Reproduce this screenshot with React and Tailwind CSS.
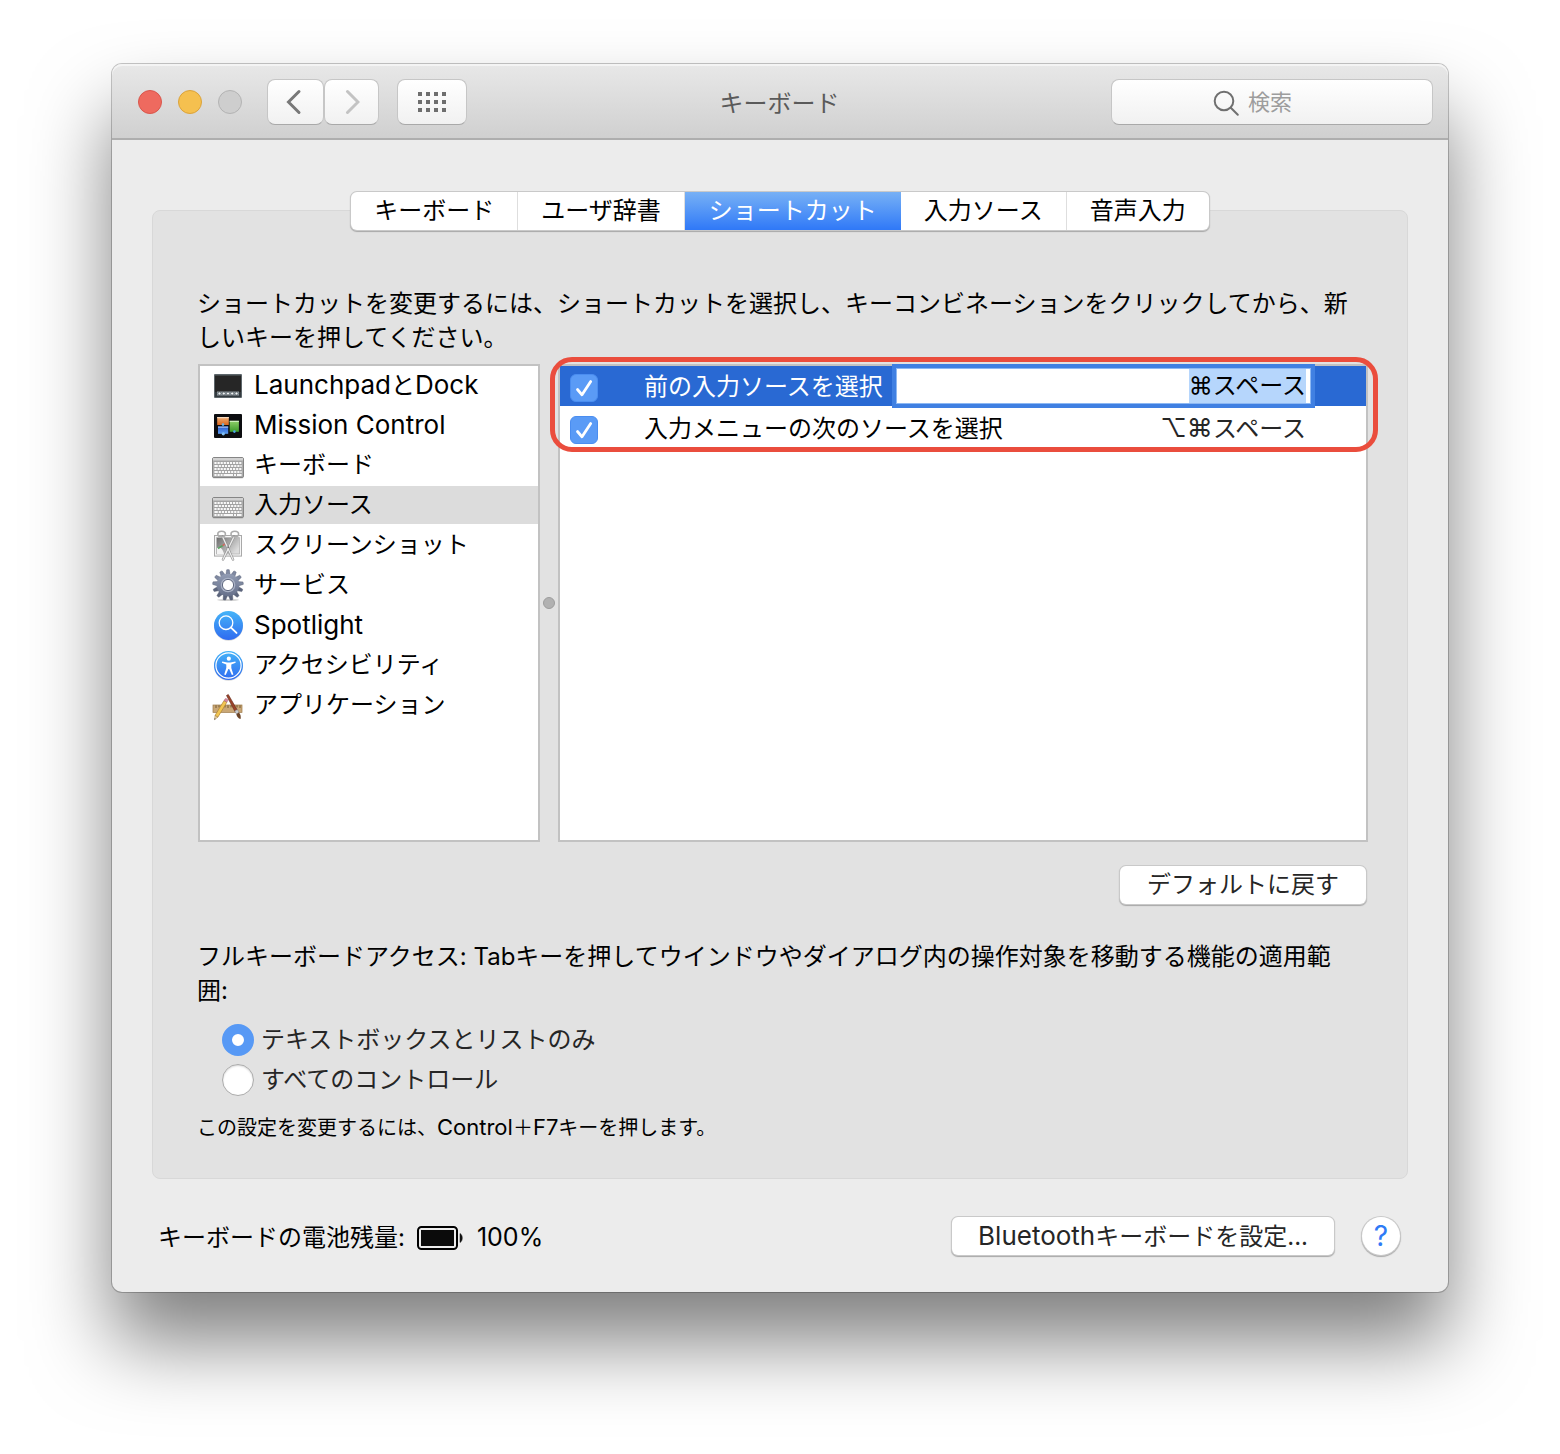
import { useEffect, useRef, useState } from 'react';

const TABS = ['キーボード', 'ユーザ辞書', 'ショートカット', '入力ソース', '音声入力'];

const CATEGORIES = [
  { id: 'launchpad', label: 'LaunchpadとDock', Icon: LaunchpadIcon },
  { id: 'mission', label: 'Mission Control', Icon: MissionControlIcon },
  { id: 'keyboard', label: 'キーボード', Icon: KeyboardIcon },
  { id: 'input', label: '入力ソース', Icon: KeyboardIcon },
  { id: 'screenshot', label: 'スクリーンショット', Icon: ScreenshotIcon },
  { id: 'services', label: 'サービス', Icon: GearIcon },
  { id: 'spotlight', label: 'Spotlight', Icon: SpotlightIcon },
  { id: 'accessibility', label: 'アクセシビリティ', Icon: AccessibilityIcon },
  { id: 'apps', label: 'アプリケーション', Icon: AppsIcon }
];

const ACCESS_MODES = [
  { id: 'text', label: 'テキストボックスとリストのみ' },
  { id: 'all', label: 'すべてのコントロール' }
];

function LaunchpadIcon() {
  return (
    <svg viewBox="0 0 32 32" className="size-8 shrink-0" aria-hidden="true">
      <rect x="2" y="5" width="28" height="24" rx="1" fill="#5d666b" />
      <rect x="3" y="6.5" width="26" height="17" fill="#262626" />
      <rect x="3" y="23" width="26" height="5" fill="#343b40" />
      <rect x="5" y="22.5" width="22" height="4" fill="#8d979e" />
      {[7.5, 11.8, 16, 20.2, 24.5].map((x) => (
        <circle key={x} cx={x} cy="24.5" r="1.5" fill="#f0f3f5" stroke="#3c4449" strokeWidth="0.6" />
      ))}
    </svg>
  );
}

function MissionControlIcon() {
  return (
    <svg viewBox="0 0 32 32" className="size-8 shrink-0" aria-hidden="true">
      <defs>
        <linearGradient id="mcOrange" x1="0" y1="0" x2="0" y2="1">
          <stop offset="0" stopColor="#f0b27a" />
          <stop offset="1" stopColor="#d9661c" />
        </linearGradient>
        <linearGradient id="mcGreen" x1="0" y1="0" x2="0" y2="1">
          <stop offset="0" stopColor="#8fd06a" />
          <stop offset="1" stopColor="#3c9a2a" />
        </linearGradient>
        <linearGradient id="mcBlue" x1="0" y1="0" x2="0" y2="1">
          <stop offset="0" stopColor="#2a5bd0" />
          <stop offset="1" stopColor="#5b9cf0" />
        </linearGradient>
      </defs>
      <rect x="2" y="5" width="28" height="24" rx="1" fill="#0c0d10" />
      <rect x="5.2" y="8" width="11.6" height="8" fill="url(#mcOrange)" />
      <rect x="5.2" y="8" width="11.6" height="1.2" fill="#f7dcc2" />
      <rect x="17.7" y="11.8" width="9.2" height="11" fill="url(#mcGreen)" />
      <rect x="17.7" y="11.8" width="9.2" height="1.2" fill="#cdeebc" />
      <rect x="6" y="17.5" width="10.2" height="7.3" fill="url(#mcBlue)" />
      <rect x="6" y="17.5" width="10.2" height="1.2" fill="#a9c6f6" />
      <circle cx="11" cy="15.6" r="1.3" fill="#68b7ea" />
      <circle cx="22.4" cy="22.6" r="1.3" fill="#4aa6e8" />
      <circle cx="11.3" cy="24.8" r="1.6" fill="#7fc0f4" />
    </svg>
  );
}

function KeyboardIcon() {
  return (
    <svg viewBox="0 0 32 32" className="size-8 shrink-0" aria-hidden="true">
      <rect x="0.5" y="9" width="31" height="20.6" rx="1.5" fill="#00000030" />
      <rect x="0.5" y="8.5" width="31" height="20" rx="1.5" fill="#b0b0b0" stroke="#858585" />
      <rect x="1" y="9" width="30" height="2.4" fill="#d2d2d2" />
      <rect x="1.8" y="12" width="28.4" height="15.6" fill="#a2a2a2" />
      <g stroke="#f8f8f8" strokeWidth="2.2">
        <path d="M2.4 14h27.2M2.4 20h27.2" strokeDasharray="2.2 0.9" />
        <path d="M2.4 17h27.2M2.4 23h27.2" strokeDasharray="3.4 0.9 2.2 0.9 2.2 0.9 2.2 0.9 2.2 0.9 2.2 0.9 2.2 0.9 2.2 0.9 3.4 0.9" />
        <path d="M2.4 26h2.2M5.5 26h2.2M8.600 26h2M11.5 26h9.5M22 26h2M25 26h4.6" />
      </g>
    </svg>
  );
}

function ScreenshotIcon() {
  return (
    <svg viewBox="0 0 32 32" className="size-8 shrink-0" aria-hidden="true">
      <defs>
        <linearGradient id="shotPhoto" x1="0" y1="0" x2="1" y2="0.6">
          <stop offset="0" stopColor="#6b6b6b" />
          <stop offset="1" stopColor="#dcdcdc" />
        </linearGradient>
      </defs>
      <rect x="2.5" y="6.5" width="27" height="20.6" fill="#f6f6f6" stroke="#a9a9a9" />
      <rect x="4.6" y="8.6" width="22.8" height="16.4" fill="url(#shotPhoto)" stroke="#b4b4b4" strokeWidth="0.8" />
      <path d="M5 25v-6c4-2 6 2 7 6z" fill="#f3f3f3" />
      <path d="M6 19.5l5-3.2" stroke="#57a35f" strokeWidth="1.6" />
      <path d="M10.6 16.6l3.4-2.4" stroke="#d2665d" strokeWidth="1.6" />
      <g fill="none" stroke="#8d8d8d" strokeWidth="2.4" strokeLinecap="round">
        <path d="M10.5 7.600L21 30.5M22 7.600L11 30.5" />
      </g>
      <g fill="none" stroke="#ececec" strokeWidth="1.3" strokeLinecap="round">
        <path d="M10.5 7.600L21 30.5M22 7.600L11 30.5" />
      </g>
      <g fill="none" stroke="#ababab" strokeWidth="1.6">
        <ellipse cx="9.6" cy="5" rx="3.8" ry="2.8" />
        <ellipse cx="22.8" cy="5" rx="3.8" ry="2.8" />
      </g>
      <circle cx="16.2" cy="18.2" r="1" fill="#777" />
    </svg>
  );
}

function GearIcon() {
  return (
    <svg viewBox="0 0 32 32" className="size-8 shrink-0" aria-hidden="true">
      <defs>
        <linearGradient id="gearFill" x1="0" y1="0" x2="0" y2="1">
          <stop offset="0" stopColor="#929cb4" />
          <stop offset="1" stopColor="#66708a" />
        </linearGradient>
      </defs>
      <ellipse cx="16" cy="31" rx="11" ry="0.9" fill="#00000030" />
      {[0, 1, 2, 3, 4, 5, 6, 7, 8, 9, 10, 11, 12].map((i) => (
        <path
          key={i}
          d="M13.8 6L14.7 0.8q1.3-.5 2.6 0L18.2 6z"
          fill={i > 3 && i < 10 ? '#5c657c' : '#7f89a1'}
          stroke="#535b72"
          strokeWidth="0.4"
          transform={`rotate(${i * 27.7} 16 16)`}
        />
      ))}
      <circle cx="16" cy="16" r="11.300" fill="url(#gearFill)" />
      <circle cx="16" cy="16" r="7.300" fill="#aab2c6" />
      <circle cx="16" cy="16" r="5.600" fill="#fff" stroke="#5f6880" strokeWidth="1" />
    </svg>
  );
}

function BlueDisc({ id }) {
  return (
    <>
      <defs>
        <linearGradient id={id} x1="0" y1="0" x2="0" y2="1">
          <stop offset="0" stopColor="#45b4f8" />
          <stop offset="1" stopColor="#2f6bf0" />
        </linearGradient>
      </defs>
      <circle cx="16.5" cy="17.2" r="14.5" fill="#00000028" />
      <circle cx="16.5" cy="16.5" r="14.5" fill={`url(#${id})`} />
    </>
  );
}

function SpotlightIcon() {
  return (
    <svg viewBox="0 0 32 32" className="size-8 shrink-0" aria-hidden="true">
      <BlueDisc id="spotFill" />
      <g fill="none" stroke="#fff" strokeLinecap="round">
        <circle cx="14" cy="13.7" r="6.8" strokeWidth="1.3" />
        <path d="M19 18.6l5.5 5.3" strokeWidth="1.9" />
      </g>
    </svg>
  );
}

function AccessibilityIcon() {
  return (
    <svg viewBox="0 0 32 32" className="size-8 shrink-0" aria-hidden="true">
      <BlueDisc id="accFill" />
      <circle cx="16.5" cy="16.5" r="12.6" fill="none" stroke="#fff" strokeWidth="1.2" />
      <circle cx="16.8" cy="9.7" r="2.1" fill="#fff" />
      <path
        d="M10.2 12.4l5 1h3.2l5-1 .3 1.3-4.400 1.700v3.700l2.100 6.300-1.500.500-2.700-6h-.800l-2.700 6-1.500-.500 2.100-6.300v-3.700l-4.400-1.700z"
        fill="#fff"
      />
    </svg>
  );
}

function AppsIcon() {
  return (
    <svg viewBox="0 0 32 32" className="size-8 shrink-0" aria-hidden="true">
      <rect x="1" y="16" width="29" height="7.4" fill="#c9a776" stroke="#9d7b4a" strokeWidth="0.7" />
      <path
        d="M4 16.4v2.6M7 16.4v2M10 16.4v2.6M13 16.4v2M16 16.4v2.6M19 16.4v2M22 16.4v2.6M25 16.4v2M28 16.4v2.6"
        stroke="#5b4423"
        strokeWidth="0.8"
      />
      <path d="M14.5 6.5l1.8-1 9.2 16-2.4 1.3z" fill="#9c4429" stroke="#5f2415" strokeWidth="0.6" />
      <path d="M22.7 22l2.7-1.5 1.6 3-2.7 1.4z" fill="#c9ccd1" stroke="#777" strokeWidth="0.4" />
      <path d="M24.3 24.9l2.7-1.4c1.6 2 2 4 1.6 6.5-2.4-.7-3.7-2.3-4.3-5.1z" fill="#6b4427" />
      <path d="M12 11.6l2.9 1.6-9 15-2.9-1.7z" fill="#f2c552" stroke="#a3782a" strokeWidth="0.6" />
      <path d="M12 11.6l1-1.7c.8-.9 3.3.4 2.9 1.7l-1 1.6z" fill="#d98aa0" stroke="#95576a" strokeWidth="0.4" />
      <path d="M3 26.5l2.9 1.7-3.4 2.5z" fill="#ead2a6" stroke="#8d6b35" strokeWidth="0.4" />
      <path d="M2.6 29.3l1 .6-1.1.8z" fill="#222" />
    </svg>
  );
}

// Latin glyphs and key symbols run slightly larger than the kana beside them.
function Label({ text }) {
  return text.split(/([A-Za-z⌘⌥ ]+)/).filter(Boolean).map((part, i) => (
    /^[A-Za-z⌘⌥ ]+$/.test(part)
      ? <span key={i} className="text-[26px]">{part}</span>
      : <span key={i}>{part}</span>
  ));
}

function Checkbox({ label, checked, onChange }) {
  return (
    <span className="grid size-7">
      <input
        type="checkbox"
        aria-label={label}
        checked={checked}
        onChange={onChange}
        className="peer col-start-1 row-start-1 size-7 appearance-none rounded-md border border-[#b5b5b5] bg-white checked:border-[#4a8df0] checked:bg-[#5a9bf6]"
      />
      <svg
        viewBox="0 0 28 28"
        className="pointer-events-none col-start-1 row-start-1 hidden size-7 peer-checked:block"
        aria-hidden="true"
      >
        <path d="M7.5 15.5l4.5 5.3L20.7 7.600" fill="none" stroke="#fff" strokeWidth="2.8" strokeLinecap="round" strokeLinejoin="round" />
      </svg>
    </span>
  );
}

function Toolbar() {
  return (
    <header className="grid h-19 grid-cols-[1fr_auto_1fr] items-center rounded-t-[10px] border-b-2 border-[#aeaeae] bg-linear-to-b from-[#e8e8e8] to-[#d0d0d0] pt-0.5 pr-[15px] pl-[26px] shadow-[inset_0_2px_0_#f4f4f4]">
      <div className="flex items-center">
        <div className="flex gap-4">
          <button aria-label="閉じる" className="size-6 rounded-full border border-[#d9564c] bg-[#ee6a5f]" />
          <button aria-label="しまう" className="size-6 rounded-full border border-[#dba33b] bg-[#f5c04f]" />
          <button aria-label="拡大" className="size-6 rounded-full border border-[#b3b3b3] bg-[#cecece]" />
        </div>
        <div className="ml-[25px] flex">
          <button aria-label="戻る" className="flex h-[46px] w-[57px] items-center justify-center rounded-lg border border-[#c6c6c6] border-b-[#a9a9a9] bg-linear-to-b from-white to-[#f1f1f1]">
            <svg viewBox="0 0 16 26" className="mr-1 h-[26px] w-4" aria-hidden="true">
              <path d="M13 2.5L2.5 13 13 23.5" fill="none" stroke="#787878" strokeWidth="3" strokeLinecap="round" />
            </svg>
          </button>
          <button aria-label="進む" disabled className="flex h-[46px] w-[55px] items-center justify-center rounded-lg border border-[#c6c6c6] border-b-[#a9a9a9] bg-linear-to-b from-white to-[#f1f1f1]">
            <svg viewBox="0 0 16 26" className="h-[26px] w-4" aria-hidden="true">
              <path d="M3.5 2.5L14 13 3.5 23.5" fill="none" stroke="#c3c3c3" strokeWidth="3" strokeLinecap="round" />
            </svg>
          </button>
        </div>
        <button aria-label="すべてを表示" className="ml-[18px] flex h-[46px] w-[70px] items-center justify-center rounded-lg border border-[#c6c6c6] border-b-[#a9a9a9] bg-linear-to-b from-white to-[#f1f1f1]">
          <svg viewBox="0 0 28 20" className="h-5 w-7" aria-hidden="true" fill="#6e6e6e">
            {[0, 8, 16].map((y) => [0, 8, 16, 24].map((x) => (
              <rect key={`${x}-${y}`} x={x} y={y} width="4" height="4" />
            )))}
          </svg>
        </button>
      </div>
      <h1 className="pt-1 pr-3 text-2xl text-[#5a5a5a]">キーボード</h1>
      <label className="flex h-[46px] w-[322px] items-center justify-center gap-2 justify-self-end rounded-lg border border-[#c6c6c6] border-b-[#a9a9a9] bg-linear-to-b from-white to-[#f1f1f1] pt-0.5 pr-5">
        <svg viewBox="0 0 28 28" className="size-7 shrink-0" aria-hidden="true">
          <g fill="none" stroke="#707070" strokeWidth="2" strokeLinecap="round">
            <circle cx="12" cy="12" r="9.300" />
            <path d="M18.8 18.8l7 7" />
          </g>
        </svg>
        <input
          type="text"
          aria-label="検索"
          placeholder="検索"
          className="w-16 bg-transparent text-[22px] outline-none placeholder:text-[#9d9d9d]"
        />
      </label>
    </header>
  );
}

export default function App() {
  const [tab, setTab] = useState('ショートカット');
  const [category, setCategory] = useState('input');
  const [mode, setMode] = useState('text');
  const [enabled, setEnabled] = useState({ prev: true, next: true });
  const shortcutRef = useRef(null);

  useEffect(() => {
    shortcutRef.current?.focus();
    shortcutRef.current?.select();
  }, []);

  function toggle(id) {
    setEnabled((e) => ({ ...e, [id]: !e[id] }));
  }

  return (
    <div className="min-h-screen overflow-hidden bg-white px-28 pt-16 pb-40 font-[Inter,'Noto_Sans_CJK_JP',sans-serif] text-2xl text-black">
      <main className="rounded-[10px] bg-[#ececec] shadow-[0_0_0_1px_rgba(0,0,0,0.22),0_50px_80px_rgba(0,0,0,0.5)]">
        <Toolbar />

        <div className="px-10 pt-[52px] pb-[37px]">
          <nav className="relative z-10 flex justify-center">
            <div className="flex h-[38px] rounded-md bg-white shadow-[0_0_0_1px_#c9c9c9,0_1px_1px_1px_#a8a8a8]">
              {TABS.map((t) => (
                <button
                  key={t}
                  onClick={() => setTab(t)}
                  className={
                    t === tab
                      ? 'bg-linear-to-b from-[#77b0f5] to-[#2f78f7] px-6 text-white'
                      : 'border-r border-[#dedede] px-[23px] first:rounded-l-md last:rounded-r-md last:border-r-0'
                  }
                >
                  {t}
                </button>
              ))}
            </div>
          </nav>

          <section className="-mt-5 rounded-lg border border-[#d8d8d8] bg-[#e2e2e2] pt-[76px] pr-[39px] pb-[33px] pl-11">
            <p className="pr-4 leading-[34px]">
              ショートカットを変更するには、ショートカットを選択し、キーコンビネーションをクリックしてから、新しいキーを押してください。
            </p>

            <div className="mt-[9px] flex h-[478px] pl-px">
              <ul className="flex w-[342px] shrink-0 flex-col gap-0.5 border-2 border-[#c2c2c2] bg-white">
                {CATEGORIES.map(({ id, label, Icon }) => (
                  <li key={id}>
                    <button
                      onClick={() => setCategory(id)}
                      className={
                        id === category
                          ? 'flex h-[38px] w-full items-center gap-[10px] bg-[#dcdcdc] pl-3 text-left'
                          : 'flex h-[38px] w-full items-center gap-[10px] pl-3 text-left'
                      }
                    >
                      <Icon />
                      <span className="whitespace-nowrap"><Label text={label} /></span>
                    </button>
                  </li>
                ))}
              </ul>

              <div className="flex w-[18px] shrink-0 items-center justify-center">
                <span className="size-3 rounded-full border border-[#9d9d9d] bg-[#b1b1b1]" />
              </div>

              <div className="relative min-w-0 flex-1">
                <div className="h-full border-2 border-[#c2c2c2] bg-white">
                  <table className="w-full border-collapse text-left">
                    <tbody>
                      <tr className="h-10 bg-[#2969d3] text-white">
                        <td className="w-[84px] pt-1 pl-[10px]">
                          <Checkbox label="前の入力ソースを選択" checked={enabled.prev} onChange={() => toggle('prev')} />
                        </td>
                        <td className="w-[253px] pt-0.5 whitespace-nowrap">前の入力ソースを選択</td>
                        <td className="pr-14">
                          <input
                            ref={shortcutRef}
                            type="text"
                            aria-label="前の入力ソースを選択のショートカット"
                            defaultValue="⌘スペース"
                            className="block h-[34px] w-full bg-white pr-1 text-right leading-[34px] text-black shadow-[0_0_0_1px_#8db8f3,0_0_0_5px_#4080e2] outline-none selection:bg-[#b6d6fc] selection:text-black"
                          />
                        </td>
                      </tr>
                      <tr className="h-11">
                        <td className="pt-1 pl-[10px]">
                          <Checkbox label="入力メニューの次のソースを選択" checked={enabled.next} onChange={() => toggle('next')} />
                        </td>
                        <td colSpan={2} className="pr-[60px]">
                          <div className="flex items-baseline justify-between leading-8">
                            <span>入力メニューの次のソースを選択</span>
                            <span className="text-[#262626]"><Label text="⌥⌘スペース" /></span>
                          </div>
                        </td>
                      </tr>
                    </tbody>
                  </table>
                </div>
                <div className="pointer-events-none absolute -top-[7px] -right-[10px] -left-2 h-[95px] rounded-[22px] border-[5px] border-[#ea4d3d]" />
              </div>
            </div>

            <div className="mt-6 flex justify-end pr-0.5">
              <button className="h-[38px] rounded-md bg-white px-[27px] text-[#262626] shadow-[0_0_0_1px_#c9c9c9,0_1px_1px_1px_#a8a8a8]">
                デフォルトに戻す
              </button>
            </div>

            <p className="mt-9 pr-4 leading-[34px]">
              フルキーボードアクセス: Tabキーを押してウインドウやダイアログ内の操作対象を移動する機能の適用範囲:
            </p>
            <div className="mt-3 flex flex-col pl-[25px]">
              {ACCESS_MODES.map((m) => (
                <label key={m.id} className="flex h-10 items-center gap-[7px] text-[#262626]">
                  <input
                    type="radio"
                    name="access"
                    checked={mode === m.id}
                    onChange={() => setMode(m.id)}
                    className="size-8 appearance-none rounded-full border border-[#ababab] bg-white shadow-[inset_0_1px_2px_#0000002a] checked:border-[10px] checked:border-[#5799f5] checked:shadow-none"
                  />
                  {m.label}
                </label>
              ))}
            </div>
            <p className="mt-[10px] text-xl leading-[34px]">
              この設定を変更するには、<span className="text-[22px]">Control</span>＋<span className="text-[22px]">F7</span>キーを押します。
            </p>
          </section>

          <footer className="mt-[38px] flex items-center justify-between pr-2 pl-[6px]">
            <div className="flex items-center gap-3 pt-1">
              <span>キーボードの電池残量:</span>
              <svg viewBox="0 0 48 26" className="h-[26px] w-12" aria-hidden="true">
                <rect x="1" y="2" width="39" height="22" rx="3.5" fill="none" stroke="#000" strokeWidth="2" />
                <rect x="4" y="5" width="33" height="16" fill="#0b0b0b" />
                <path d="M43 8.500c3 1.500 3 7.500 0 9z" fill="#111" stroke="#111" strokeWidth="0.5" />
              </svg>
              <span className="text-[25px]">100%</span>
            </div>
            <div className="flex items-center gap-7">
              <button className="h-[38px] rounded-md bg-white px-[26px] text-[#262626] shadow-[0_0_0_1px_#c9c9c9,0_1px_1px_1px_#a8a8a8]">
                <Label text="Bluetoothキーボードを設定..." />
              </button>
              <button aria-label="ヘルプ" className="size-[38px] rounded-full bg-white text-[28px] leading-[38px] text-[#2f7bf6] shadow-[0_0_0_1px_#c9c9c9,0_1px_1px_1px_#a8a8a8]">
                ?
              </button>
            </div>
          </footer>
        </div>
      </main>
    </div>
  );
}
